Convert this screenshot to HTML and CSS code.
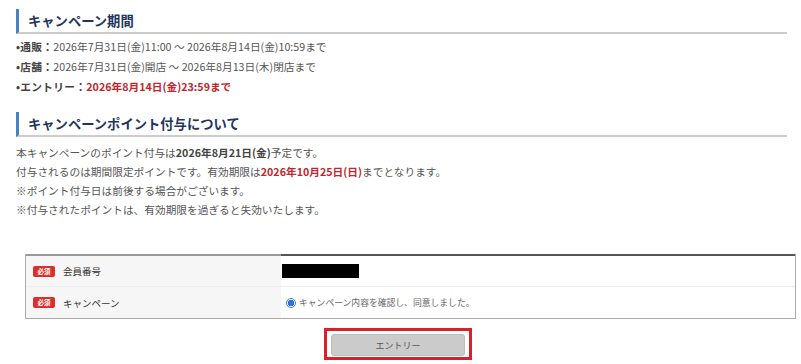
FILE: index.html
```html
<!DOCTYPE html>
<html lang="ja">
<head>
<meta charset="utf-8">
<link rel="stylesheet" href="styles.css">
</head>
<body>
<section class="sec">
  <h2 class="ttl">キャンペーン期間</h2>
  <ul class="period">
    <li><b>•通販：</b>2026年7月31日(金)11:00 〜 2026年8月14日(金)10:59まで</li>
    <li><b>•店舗：</b>2026年7月31日(金)開店 〜 2026年8月13日(木)閉店まで</li>
    <li><b>•エントリー：</b><b class="red">2026年8月14日(金)23:59まで</b></li>
  </ul>
</section>
<section class="sec sec2">
  <h2 class="ttl">キャンペーンポイント付与について</h2>
  <div class="txt">
    <p>本キャンペーンのポイント付与は<b>2026年8月21日(金)</b>予定です。</p>
    <p>付与されるのは期間限定ポイントです。有効期限は<b class="red">2026年10月25日(日)</b>までとなります。</p>
    <p>※ポイント付与日は前後する場合がございます。</p>
    <p>※付与されたポイントは、有効期限を過ぎると失効いたします。</p>
  </div>
</section>
<div class="form">
  <div class="row first">
    <div class="th"><span class="req">必須</span>会員番号</div>
    <div class="td"><span class="mask"></span></div>
  </div>
  <div class="row">
    <div class="th"><span class="req">必須</span>キャンペーン</div>
    <div class="td"><label class="radio"><span class="dot"></span>キャンペーン内容を確認し、同意しました。</label></div>
  </div>
</div>
<div class="btnwrap">
  <div class="btnframe"><button class="btn">エントリー</button></div>
</div>
</body>
</html>
```
FILE: styles.css
```css
* { box-sizing: border-box; }
html, body { margin: 0; padding: 0; background: #fff; }
body {
  font-family: "Noto Sans CJK JP", "Noto Sans", sans-serif;
  color: #555;
  padding: 9px 14px 0 16px;
  width: 801px;
  height: 364px;
  overflow: hidden;
}
.ttl {
  margin: 0;
  height: 25px;
  font-size: 13.3px;
  font-weight: bold;
  color: #1e355c;
  line-height: 23px;
  padding-left: 9px;
  border-left: 3px solid #4b7fc6;
  border-bottom: 2px solid #ccc;
}
.period {
  list-style: none;
  margin: 3px 0 0;
  padding: 0;
  font-size: 10.7px;
  line-height: 20px;
}
.period b { color: #444; letter-spacing: 0.3px; }
b.red, .red { color: #c0272d; font-weight: bold; }
.period b.red { letter-spacing: 0; }
.sec2 { margin-top: 15px; }
.txt { margin-top: 6px; font-size: 10.7px; line-height: 19px; }
.txt p { margin: 0; }
.txt b { color: #444; }
.txt b.red { color: #c0272d; }
.form {
  margin: 35px 0 0 9px;
  width: 771px;
  border: 1px solid #aaa;
  border-top: none;
}
.row { display: flex; height: 32px; }
.row + .row .th, .row + .row .td { border-top: 1px solid #eee; }
.first .th { border-top: 2px solid #999; }
.first .td { border-top: 2px solid #555; }
.th {
  width: 255px;
  background: #f6f6f6;
  display: flex;
  align-items: center;
  padding-left: 7px;
  font-size: 9.5px;
  color: #333;
}
.req {
  display: inline-block;
  background: #d9302c;
  color: #fff;
  font-size: 6.5px;
  font-weight: bold;
  width: 22px;
  height: 11px;
  line-height: 11px;
  text-align: center;
  border-radius: 2px;
  margin-right: 8px;
}
.td {
  flex: 1;
  display: flex;
  align-items: center;
  padding-left: 1px;
}
.mask { display: block; width: 77px; height: 14px; background: #000; }
.radio {
  display: flex;
  align-items: center;
  font-size: 8.8px;
  color: #666;
  padding-left: 4px;
}
.dot {
  width: 10px;
  height: 10px;
  border-radius: 50%;
  border: 1px solid #3b7ce0;
  background: radial-gradient(circle, #2f6fe0 0 3px, #fff 3.5px);
  margin-right: 3px;
}
.btnwrap { display: flex; padding-left: 308px; margin-top: 9px; }
.btnframe {
  width: 148px;
  height: 32px;
  border: 3px solid #d8222b;
  padding: 3px 4px;
}
.btn {
  display: block;
  width: 134px;
  height: 22px;
  background: #cbcbcb;
  border: 1px solid #bdbdbd;
  border-radius: 3px;
  font-family: "Noto Sans CJK JP", sans-serif;
  font-size: 9px;
  color: #555;
  padding: 0;
}
```
